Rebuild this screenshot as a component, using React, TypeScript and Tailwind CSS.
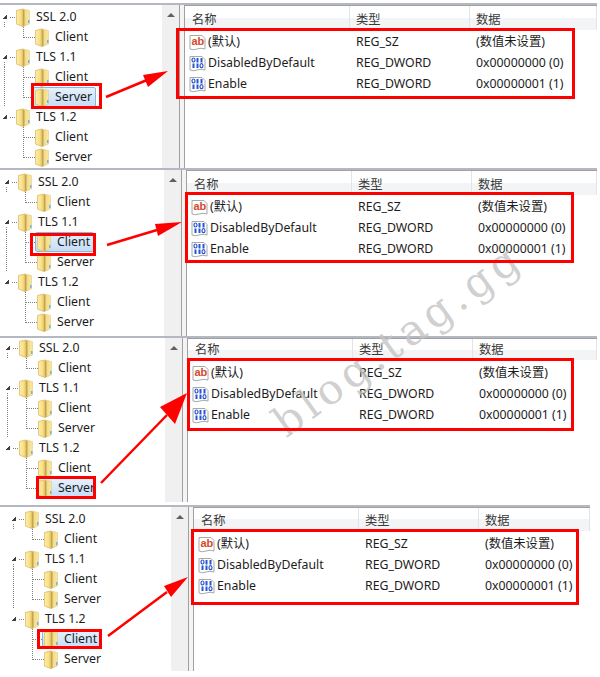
const CJK = "font-['Noto_Sans','Noto_Sans_CJK_SC',sans-serif]";

function Folder() {
  return (
    <svg width="14" height="19" viewBox="0 0 14 19" className="shrink-0">
      <defs>
        <linearGradient id="fa" x1="0" x2="1" y1="0" y2="0">
          <stop offset="0" stopColor="#fdeea8" />
          <stop offset="0.6" stopColor="#f9e08a" />
          <stop offset="1" stopColor="#e6c566" />
        </linearGradient>
        <linearGradient id="fb" x1="0" x2="1" y1="0" y2="0">
          <stop offset="0" stopColor="#e2c266" />
          <stop offset="1" stopColor="#fbe89c" />
        </linearGradient>
      </defs>
      <path d="M0.5 2.5 L7 1 L13.5 2.5 L13.5 16 L7 18.5 L0.5 16 Z" fill="url(#fb)" stroke="#dcc27c" strokeWidth="0.5" />
      <path d="M0.5 2.5 L7 1 L7 18.5 L0.5 16 Z" fill="url(#fa)" stroke="#d4b45e" strokeWidth="0.5" />
      <path d="M7 1.5 L8.5 2 L8.5 18 L7 18.5 Z" fill="#c4a450" />
      <rect x="12" y="12" width="1.5" height="3" fill="#6fb4e6" />
    </svg>
  );
}

function ParentGutter({ last }: { last: boolean }) {
  return (
    <svg width="16" height="20" className="shrink-0" shapeRendering="crispEdges">
      <path d="M2 12 L7 7 L7 12 Z" fill="#404040" />
      <path d="M10 10.5 H16" stroke="#808080" strokeDasharray="1 1" />
      {!last && <path d="M4.5 15 V20" stroke="#808080" strokeDasharray="1 1" />}
    </svg>
  );
}

function ChildGutter({ rootLine, last, w }: { rootLine: boolean; last: boolean; w: number }) {
  return (
    <svg width={w} height="20" className="shrink-0" shapeRendering="crispEdges">
      {rootLine && <path d="M4.5 0 V20" stroke="#808080" strokeDasharray="1 1" />}
      <path d={last ? "M23.5 0 V10.5" : "M23.5 0 V20"} stroke="#808080" strokeDasharray="1 1" />
      <path d={`M24 10.5 H${w}`} stroke="#808080" strokeDasharray="1 1" />
    </svg>
  );
}

function Parent({ label, last }: { label: string; last: boolean }) {
  return (
    <div className="flex h-5 items-center">
      <ParentGutter last={last} />
      <Folder />
      <span className="ml-[6px]">{label}</span>
    </div>
  );
}

function Child({ label, rootLine, last, selected, tight }: { label: string; rootLine: boolean; last: boolean; selected: boolean; tight?: boolean }) {
  return (
    <div className="flex h-5 items-center">
      <ChildGutter rootLine={rootLine} last={last} w={selected ? 33 : 35} />
      <div
        className={
          selected
            ? `flex h-5 items-center rounded-[2px] border border-[#8db4de] bg-gradient-to-b from-[#e6f1fc] to-[#c5ddf8] pl-[1px] ${tight ? "pr-0" : "pr-[3px]"}`
            : "flex h-5 items-center"
        }
      >
        <Folder />
        <span className="ml-[6px]">{label}</span>
      </div>
    </div>
  );
}

function Tree({ selected }: { selected: string }) {
  return (
    <div className="flex flex-col">
      <Parent label="SSL 2.0" last={false} />
      <Child label="Client" rootLine={false} last selected={false} />
      <Parent label="TLS 1.1" last={false} />
      <Child label="Client" rootLine last={false} selected={selected === "11c"} />
      <Child label="Server" rootLine last selected={selected === "11s"} />
      <Parent label="TLS 1.2" last />
      <Child label="Client" rootLine={false} last={false} selected={selected === "12c"} />
      <Child label="Server" rootLine={false} last selected={selected === "12s"} tight />
    </div>
  );
}

function AbIcon() {
  return (
    <svg width="17" height="17" viewBox="0 0 17 17" className="shrink-0">
      <path d="M1 1.5 H13 L16 4.5 V15 Q12 13.5 8 15 T1 15 Z" fill="#fff" stroke="#a8a8a8" />
      <text x="2.5" y="11" fontSize="11" fontWeight="700" fontFamily="'Liberation Sans',sans-serif" fill="#d2492a">ab</text>
    </svg>
  );
}

function BinIcon() {
  const b = "#2a55cf";
  return (
    <svg width="17" height="17" viewBox="0 0 17 17" className="shrink-0">
      <path d="M1 1.5 H13 L16 4.5 V15 Q12 13.5 8 15 T1 15 Z" fill="#fff" stroke="#a8a8a8" />
      <ellipse cx="4.5" cy="5" rx="1.5" ry="2" fill="none" stroke={b} strokeWidth="1.2" />
      <rect x="7.5" y="3" width="2" height="4.5" fill={b} />
      <rect x="11.5" y="3" width="2" height="4.5" fill={b} />
      <rect x="3.5" y="8.5" width="2" height="4.5" fill={b} />
      <rect x="7.5" y="8.5" width="2" height="4.5" fill={b} />
      <ellipse cx="12.5" cy="10.7" rx="1.5" ry="2" fill="none" stroke={b} strokeWidth="1.2" />
    </svg>
  );
}

function ValueRow({ icon, name, type, data }: { icon: "ab" | "bin"; name: string; type: string; data: string }) {
  return (
    <div className="flex h-[21px] items-center">
      <div className="flex w-[165px] items-center pl-[4px]">
        {icon === "ab" ? <AbIcon /> : <BinIcon />}
        <span className="ml-[2px]">{name}</span>
      </div>
      <span className="w-[120px] pl-[6px]">{type}</span>
      <span className="pl-[6px]">{data}</span>
    </div>
  );
}

function Values({ headH, rowPad }: { headH: string; rowPad: string }) {
  return (
    <div className="flex flex-1 flex-col border-l border-t border-[#a0a0a0]">
      <div className={`flex ${headH}`}>
        {["名称", "类型", "数据"].map((h, i) => (
          <div
            key={h}
            className={
              (i === 0 ? "w-[165px] pl-[7px] " : i === 1 ? "w-[120px] pl-[6px] " : "flex-1 pl-[6px] ") +
              "flex items-end border-r border-[#e2e4e7] bg-gradient-to-b from-white from-50% to-[#f2f4f6] to-50% pb-[2px] leading-[16px] text-[#3a3a3a]"
            }
          >
            {h}
          </div>
        ))}
      </div>
      <div className={rowPad}>
        <ValueRow icon="ab" name="(默认)" type="REG_SZ" data="(数值未设置)" />
        <ValueRow icon="bin" name="DisabledByDefault" type="REG_DWORD" data="0x00000000 (0)" />
        <ValueRow icon="bin" name="Enable" type="REG_DWORD" data="0x00000001 (1)" />
      </div>
    </div>
  );
}

type PanelProps = { h: string; treeW: string; indent: string; right: string; selected: string; mt: string; treePad: string; headH: string; rowPad: string };

function Panel({ h, treeW, indent, right, selected, mt, treePad, headH, rowPad }: PanelProps) {
  return (
    <div className={`flex ${h} ${mt} ${right} border-t-2 border-[#b4b8c0]`}>
      <div className={`flex ${treeW} ${indent} shrink-0 border-r border-[#a0a0a0] bg-white`}>
        <div className={`flex-1 ${treePad}`}>
          <Tree selected={selected} />
        </div>
        <div className="flex w-[17px] shrink-0 justify-center bg-[#f0f0f0] pt-[8px]">
          <div className="h-0 w-0 border-x-[4px] border-b-[4px] border-x-transparent border-b-[#606060]" />
        </div>
      </div>
      <div className="w-[4px] shrink-0 bg-[#f4f4f4]" />
      <Values headH={headH} rowPad={rowPad} />
    </div>
  );
}

function Box({ cls }: { cls: string }) {
  return <div className={`pointer-events-none absolute border-[3px] border-[#ff0000] ${cls}`} />;
}

function Arrows() {
  const items = [
    { t: "106,97 147,80", h: "168,71 143,75 148,87" },
    { t: "107,245 157,230", h: "182,222 155,224 158,236" },
    { t: "101,483 167,415", h: "187,393 160,407 175,424" },
    { t: "108,636 167,592", h: "188,577 164,586 171,597" },
  ];
  return (
    <svg width="600" height="677" className="pointer-events-none absolute left-0 top-0">
      {items.map((a) => (
        <g key={a.t}>
          <polyline points={a.t} fill="none" stroke="#ff0000" strokeWidth="2.5" />
          <polygon points={a.h} fill="#ff0000" />
        </g>
      ))}
    </svg>
  );
}

export default function App() {
  return (
    <div className={`relative h-[677px] w-[600px] overflow-hidden bg-white text-[12.3px] text-[#1c1c1c] ${CJK}`}>
      <div className="flex flex-col pt-[3px]">
        <Panel mt="" h="h-[165px]" treeW="w-[180px]" indent="" right="mr-[3px]" selected="11s" treePad="pt-[2px]" headH="h-[24px]" rowPad="pt-[2px]" />
        <Panel mt="" h="h-[168px]" treeW="w-[182px]" indent="pl-[2px]" right="mr-[3px]" selected="11c" treePad="pt-[2px]" headH="h-[24px]" rowPad="pt-[2px]" />
        <Panel mt="" h="h-[166px]" treeW="w-[183px]" indent="pl-[3px]" right="mr-[3px]" selected="12s" treePad="pt-0" headH="h-[21px]" rowPad="pt-[3px]" />
        <Panel mt="mt-[3px]" h="h-[166px]" treeW="w-[189px]" indent="pl-[9px]" right="mr-[10px]" selected="12c" treePad="pt-[2px]" headH="h-[23px]" rowPad="pt-[3px]" />
      </div>

      <div className="pointer-events-none absolute left-[398px] top-[340px] -translate-x-1/2 -translate-y-1/2 rotate-[-36deg] whitespace-nowrap font-['DejaVu_Serif',serif] text-[42px] leading-none tracking-[5px] text-[#c4c4c4]/80">
        blog.tag.gg
      </div>

      <Box cls="left-[176px] top-[28px] h-[71px] w-[399px]" />
      <Box cls="left-[31px] top-[83px] h-[26px] w-[71px]" />
      <Box cls="left-[185px] top-[192px] h-[71px] w-[389px]" />
      <Box cls="left-[30px] top-[233px] h-[23px] w-[66px]" />
      <Box cls="left-[187px] top-[358px] h-[73px] w-[387px]" />
      <Box cls="left-[36px] top-[476px] h-[23px] w-[60px]" />
      <Box cls="left-[191px] top-[529px] h-[76px] w-[388px]" />
      <Box cls="left-[37px] top-[629px] h-[20px] w-[65px]" />
      <Arrows />
    </div>
  );
}
